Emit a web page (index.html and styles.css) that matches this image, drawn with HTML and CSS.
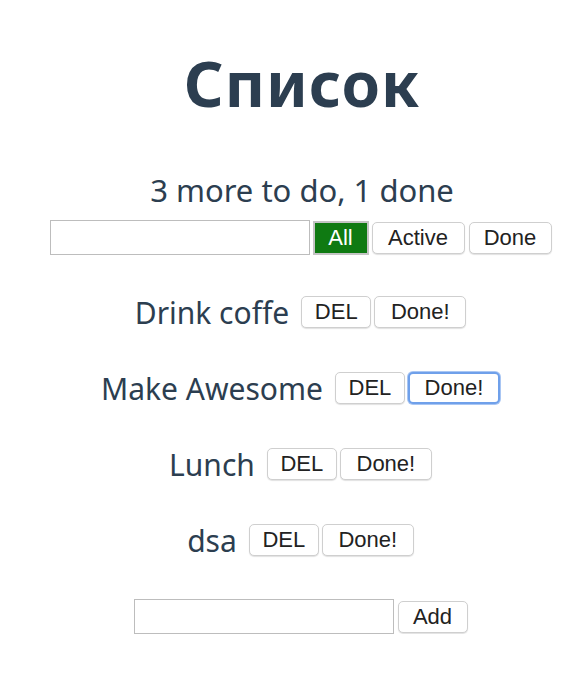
FILE: index.html
```html
<!DOCTYPE html>
<html>
<head>
<meta charset="utf-8">
<link rel="stylesheet" href="styles.css">
</head>
<body>
<div class="app">
  <h1 class="title">Список</h1>
  <div class="summary">3 more to do, 1 done</div>
  <div class="filter-row">
    <input class="field" type="text">
    <button class="btn btn-active">All</button>
    <button class="btn btn-f1">Active</button>
    <button class="btn btn-f2">Done</button>
  </div>
  <div class="list">
    <div class="item"><span class="item-text">Drink coffe</span><button class="btn">DEL</button><button class="btn">Done!</button></div>
    <div class="item"><span class="item-text">Make Awesome</span><button class="btn">DEL</button><button class="btn btn-focus">Done!</button></div>
    <div class="item"><span class="item-text">Lunch</span><button class="btn">DEL</button><button class="btn">Done!</button></div>
    <div class="item"><span class="item-text">dsa</span><button class="btn">DEL</button><button class="btn">Done!</button></div>
  </div>
  <div class="add-row">
    <input class="field" type="text">
    <button class="btn btn-add">Add</button>
  </div>
</div>
</body>
</html>
```
FILE: styles.css
```css
html, body {
  margin: 0;
  padding: 0;
  background: #ffffff;
}
.app {
  box-sizing: border-box;
  width: 578px;
  padding-left: 26px;
  display: flex;
  flex-direction: column;
  align-items: center;
  font-family: "Noto Sans", sans-serif;
  color: #2c3e50;
}
.title {
  margin: 46px 0 0;
  font-size: 62px;
  line-height: 74px;
  font-weight: 700;
  letter-spacing: 1px;
}
.summary {
  margin-top: 52px;
  font-size: 31px;
  line-height: 36px;
  font-weight: 400;
}
.filter-row {
  display: flex;
  align-items: center;
  margin-top: 12px;
}
.field {
  box-sizing: border-box;
  width: 260px;
  height: 35px;
  border: 1px solid #bdbdbd;
  border-radius: 0;
  margin: 0 3px 0 0;
  padding: 0 4px;
  background: #fff;
}
.btn {
  box-sizing: border-box;
  height: 32px;
  padding: 0 12px;
  margin: 0 3px 0 0;
  font-family: "Liberation Sans", Arial, sans-serif;
  font-size: 22px;
  color: #222;
  background: #ffffff;
  border: 1px solid #cfcfcf;
  border-radius: 5px;
  box-shadow: 0 1px 1px rgba(0, 0, 0, 0.12);
}
.btn-active {
  height: 34px;
  width: 56px;
  padding: 0;
  background: #0f7a12;
  color: #ffffff;
  border: 2px solid #c4c4c4;
  border-radius: 0;
  box-shadow: none;
}
.btn-f1 {
  width: 93px;
  padding: 0;
  margin-right: 4px;
}
.btn-f2 {
  width: 83px;
  padding: 0;
}
.btn-focus {
  border: 2px solid #6fa0ea;
  box-shadow: 0 0 0 1px #a9c6f3;
}
.list {
  display: flex;
  flex-direction: column;
  align-items: center;
  gap: 44px;
  margin-top: 41px;
}
.item {
  display: flex;
  align-items: center;
  height: 32px;
}
.item-text {
  font-size: 30px;
  line-height: 32px;
  margin-right: 12px;
  position: relative;
  top: 1px;
}
.item .btn {
  width: 70px;
  padding: 0;
}
.item .btn + .btn {
  width: 92px;
}
.add-row {
  display: flex;
  align-items: center;
  margin-top: 43px;
}
.btn-add {
  width: 70px;
  padding: 0;
  margin-left: 1px;
}
```
